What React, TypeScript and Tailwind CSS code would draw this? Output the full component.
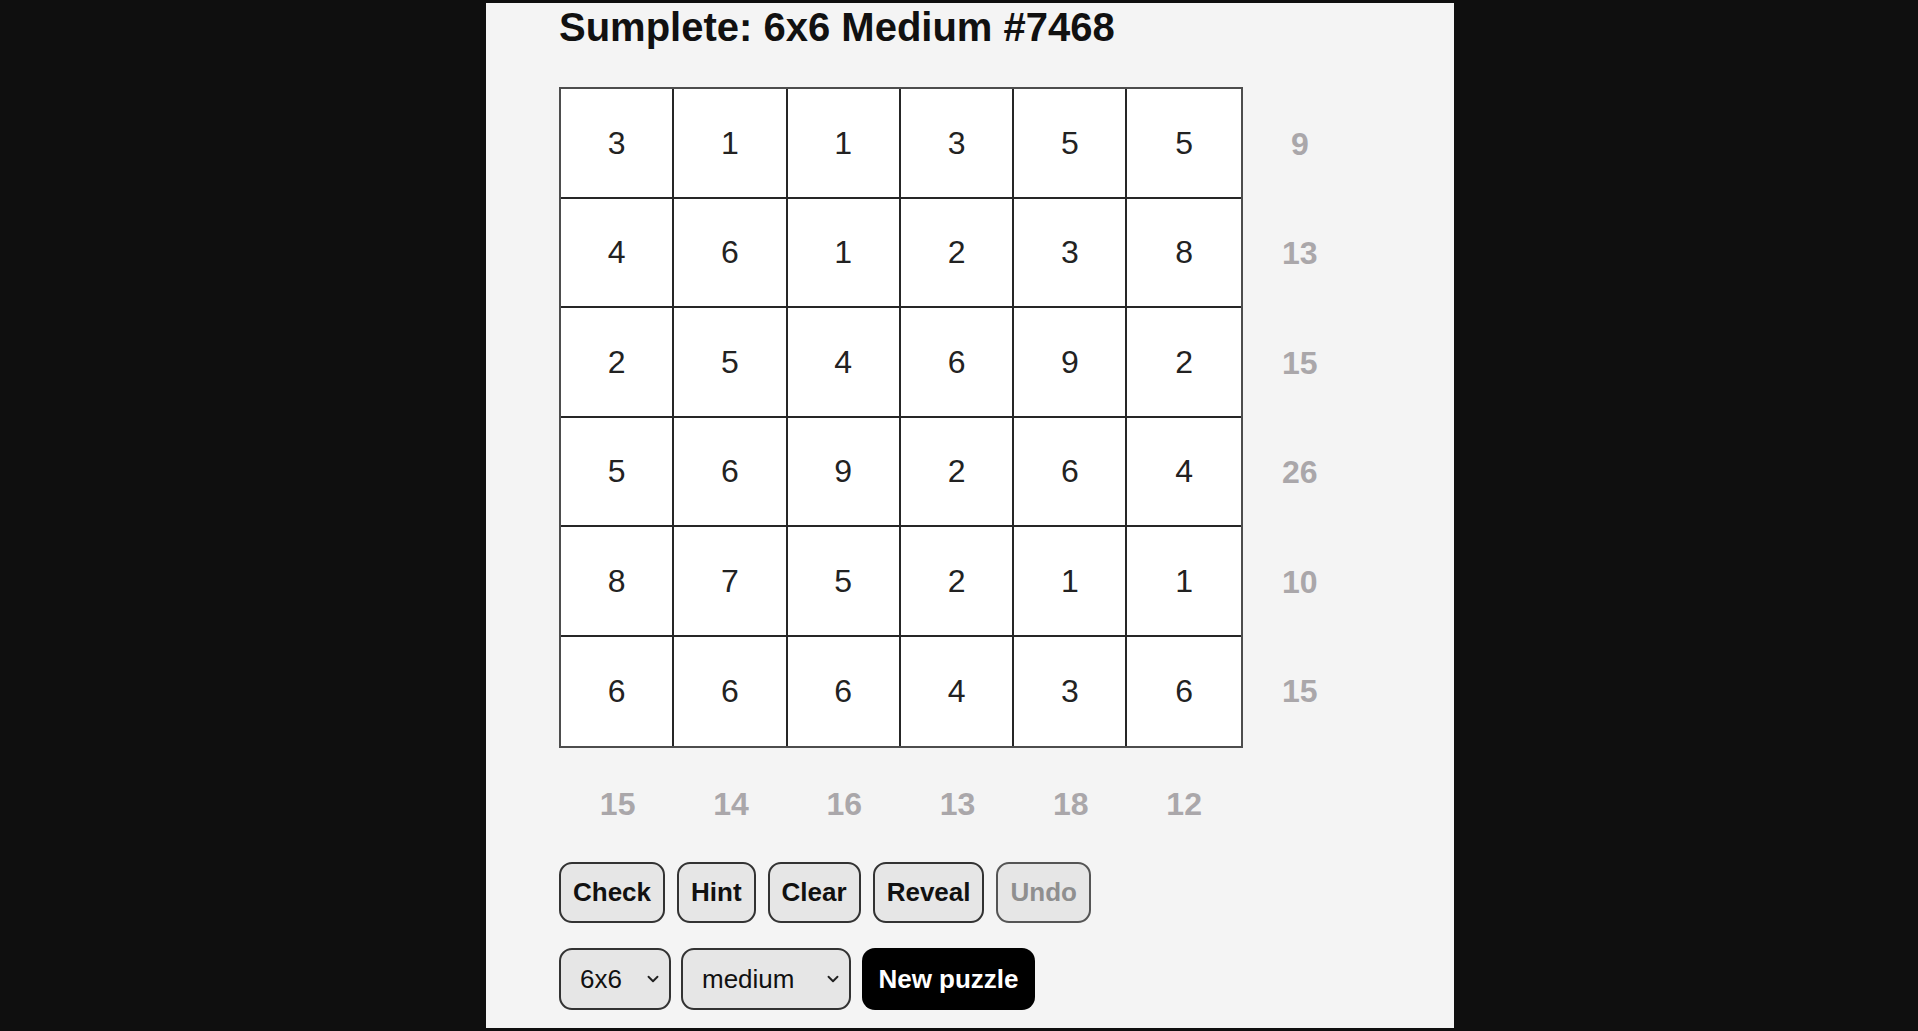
import { ChevronDown } from 'lucide-react';

const GRID = [
  [3, 1, 1, 3, 5, 5],
  [4, 6, 1, 2, 3, 8],
  [2, 5, 4, 6, 9, 2],
  [5, 6, 9, 2, 6, 4],
  [8, 7, 5, 2, 1, 1],
  [6, 6, 6, 4, 3, 6],
];

const ROW_SUMS = [9, 13, 15, 26, 10, 15];
const COL_SUMS = [15, 14, 16, 13, 18, 12];

const ACTIONS = ['Check', 'Hint', 'Clear', 'Reveal', 'Undo'];

function Select({ value, options, width }: { value: string; options: string[]; width: string }) {
  return (
    <div className={`relative h-[62px] ${width}`}>
      <select
        defaultValue={value}
        className="w-full h-full appearance-none bg-[#e6e6e6] border-2 border-[#333] rounded-[13px] pl-[19px] text-[26px] text-[#111] outline-none"
      >
        {options.map((o) => (
          <option key={o} value={o}>{o}</option>
        ))}
      </select>
      <ChevronDown size={18} strokeWidth={2.5} className="absolute right-[9px] top-[22px] text-[#222] pointer-events-none" />
    </div>
  );
}

export default function App() {
  return (
    <div className="min-h-screen bg-[#0f0f0f] pt-[3px] font-['Liberation_Sans',Arial,sans-serif]">
      <main className="ml-[486px] w-[968px] h-[1025px] bg-[#f4f4f4] pl-[73px] pt-[2px]">
        <h1 className="text-[40px] leading-[44px] font-bold text-[#111]">Sumplete: 6x6 Medium #7468</h1>

        {/* Board + row sums */}
        <div className="flex mt-[38px]">
          <div className="border-2 border-[#4d4d4d] grid grid-cols-6 bg-white">
            {GRID.map((row, r) =>
              row.map((n, c) => (
                <div
                  key={`${r}-${c}`}
                  className={`w-[113.3px] h-[109.5px] flex items-center justify-center text-[32px] text-[#222] ${c < 5 ? 'border-r-2' : ''} ${r < 5 ? 'border-b-2' : ''} border-[#262626]`}
                >
                  {n}
                </div>
              ))
            )}
          </div>
          <div className="flex flex-col pt-[2px]">
            {ROW_SUMS.map((s, i) => (
              <div key={i} className="w-[114px] h-[109.5px] flex items-center justify-center text-[32px] font-bold text-[#aaa7aa]">
                {s}
              </div>
            ))}
          </div>
        </div>

        {/* Column sums */}
        <div className="flex pl-[2px]">
          {COL_SUMS.map((s, i) => (
            <div key={i} className="w-[113.3px] h-[112px] flex items-center justify-center text-[32px] font-bold text-[#aaa7aa]">
              {s}
            </div>
          ))}
        </div>

        <div className="flex gap-[12px] mt-[2px]">
          {ACTIONS.map((a) => (
            <button
              key={a}
              className={`h-[61px] px-[12px] rounded-[13px] border-2 bg-[#e6e6e6] text-[26px] font-bold ${a === 'Undo' ? 'text-[#8f8f8f] border-[#555]' : 'text-[#111] border-[#333]'}`}
            >
              {a}
            </button>
          ))}
        </div>

        <div className="flex gap-[10px] mt-[25px] items-center">
          <Select value="6x6" options={['4x4', '5x5', '6x6', '7x7']} width="w-[112px]" />
          <Select value="medium" options={['easy', 'medium', 'hard']} width="w-[170px]" />
          <button className="h-[62px] w-[173px] ml-[1px] rounded-[13px] bg-black text-white text-[26px] font-bold">
            New puzzle
          </button>
        </div>
      </main>
    </div>
  );
}
